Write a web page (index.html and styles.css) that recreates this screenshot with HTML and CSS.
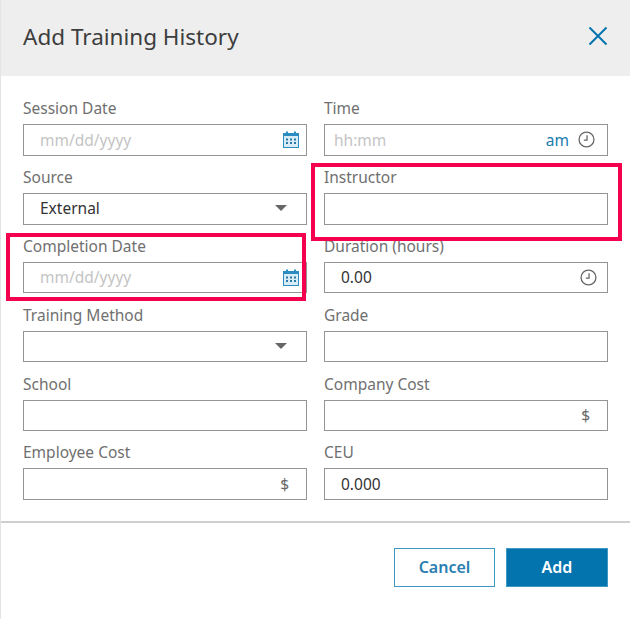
FILE: index.html
```html
<!DOCTYPE html>
<html lang="en">
<head>
<meta charset="utf-8">
<title>Add Training History</title>
<link rel="stylesheet" href="styles.css">
</head>
<body>
<div class="modal">
  <header class="head">
    <h1 class="title">Add Training History</h1>
    <svg class="close" width="20" height="20" viewBox="0 0 20 20"><path d="M1.5 1.5 18.5 18.5M18.5 1.5 1.5 18.5" fill="none" stroke="#0474af" stroke-width="2"/></svg>
  </header>
  <form class="form">
    <div class="field">
      <label class="label">Session Date</label>
      <div class="input"><span class="value ph">mm/dd/yyyy</span>
        <svg class="cal" width="16" height="17" viewBox="0 0 16 17"><rect x="0.5" y="2.5" width="15" height="14" fill="#d7ecf7" stroke="#2a8cc0"/><rect x="0" y="2" width="16" height="3" fill="#2a8cc0"/><path d="M4 0.5v3M12 0.5v3" stroke="#2a8cc0" stroke-width="2"/><path d="M3 7.500h2v2H3zM7 7.500h2v2H7zM11 7.500h2v2h-2zM3 11h2v2H3zM7 11h2v2H7zM11 11h2v2h-2z" fill="#2878a8"/></svg>
      </div>
    </div>
    <div class="field">
      <label class="label">Time</label>
      <div class="input"><span class="value ph narrow">hh:mm</span><span class="ampm">am</span>
        <svg class="clock" width="17" height="17" viewBox="0 0 16 16"><circle cx="8" cy="8" r="7" fill="none" stroke="#666" stroke-width="1.200"/><path d="M8.500 4v4.500H5.500" fill="none" stroke="#666" stroke-width="1.200"/></svg>
      </div>
    </div>
    <div class="field">
      <label class="label">Source</label>
      <div class="input"><span class="value">External</span><span class="caret"></span></div>
    </div>
    <div class="field">
      <label class="label">Instructor</label>
      <div class="input"></div>
    </div>
    <div class="field">
      <label class="label">Completion Date</label>
      <div class="input"><span class="value ph">mm/dd/yyyy</span>
        <svg class="cal" width="16" height="17" viewBox="0 0 16 17"><rect x="0.5" y="2.500" width="15" height="14" fill="#d7ecf7" stroke="#2a8cc0"/><rect x="0" y="2" width="16" height="3" fill="#2a8cc0"/><path d="M4 0.500v3M12 0.500v3" stroke="#2a8cc0" stroke-width="2"/><path d="M3 7.500h2v2H3zM7 7.500h2v2H7zM11 7.500h2v2h-2zM3 11h2v2H3zM7 11h2v2H7zM11 11h2v2h-2z" fill="#2878a8"/></svg>
      </div>
    </div>
    <div class="field">
      <label class="label">Duration (hours)</label>
      <div class="input"><span class="value">0.00</span>
        <svg class="clock end" width="17" height="17" viewBox="0 0 16 16"><circle cx="8" cy="8" r="7" fill="none" stroke="#666" stroke-width="1.200"/><path d="M8.500 4v4.500H5.500" fill="none" stroke="#666" stroke-width="1.200"/></svg>
      </div>
    </div>
    <div class="field">
      <label class="label">Training Method</label>
      <div class="input"><span class="value"></span><span class="caret"></span></div>
    </div>
    <div class="field">
      <label class="label">Grade</label>
      <div class="input"></div>
    </div>
    <div class="field">
      <label class="label">School</label>
      <div class="input"></div>
    </div>
    <div class="field">
      <label class="label">Company Cost</label>
      <div class="input"><span class="value"></span><span class="unit">$</span></div>
    </div>
    <div class="field">
      <label class="label">Employee Cost</label>
      <div class="input"><span class="value"></span><span class="unit">$</span></div>
    </div>
    <div class="field">
      <label class="label">CEU</label>
      <div class="input"><span class="value">0.000</span></div>
    </div>
  </form>
  <footer class="foot">
    <button class="btn cancel" type="button">Cancel</button>
    <button class="btn add" type="button">Add</button>
  </footer>
  <div class="mark mark-instructor"></div>
  <div class="mark mark-completion"></div>
</div>
</body>
</html>
```
FILE: styles.css
```css
* { box-sizing: border-box; }
html, body { margin: 0; height: 100%; background: #fff; }
body { font-family: "Noto Sans", "Open Sans", sans-serif; color: #333; overflow: hidden; }
.modal { position: relative; height: 619px; border-left: 1px solid #e4e4e4; }
.head { height: 76px; background: #eee; display: flex; align-items: center; justify-content: space-between; padding: 0 23px 0 22px; }
.title { margin: 0; font-size: 22.500px; font-weight: 400; color: #3d3d3d; line-height: 30px; position: relative; top: -1px; }
.close { display: block; position: relative; top: -2px; margin-right: -1px; }
.form { display: grid; grid-template-columns: 284px 284px; column-gap: 17px; grid-auto-rows: 68.800px; padding: 21.400px 0 0 22px; height: 445px; }
.field { display: flex; flex-direction: column; }
.label { font-size: 15.500px; line-height: 22px; height: 27px; color: #707070; }
.input { height: 31.500px; border: 1px solid #949494; background: #fff; display: flex; align-items: center; padding: 0 12px 1px 16px; font-size: 15.500px; }
.value { flex: 1; color: #333; line-height: 20px; }
.ph { color: #c4c4c4; }
.narrow { margin-left: -7px; }
.ampm { color: #1a7cb0; margin-right: 9px; }
.cal { margin-right: -5px; flex: none; }
.clock { flex: none; margin-right: 0; }
.clock.end { margin-right: -2px; }
.unit { color: #666; margin-right: 5px; font-size: 15.500px; line-height: 20px; }
.caret { width: 0; height: 0; border-left: 6px solid transparent; border-right: 6px solid transparent; border-top: 6px solid #666; margin-right: 7px; }
.foot { border-top: 2px solid #cfcfcf; height: 98px; padding-top: 25px; display: flex; justify-content: flex-end; gap: 11px; padding-right: 22px; }
.btn { height: 39px; font-family: inherit; font-size: 16px; font-weight: 600; padding: 0 0 1px; }
.cancel { width: 101px; background: #fff; color: #2a7fb0; border: 1px solid #3f97c4; }
.add { width: 102px; background: #0474af; color: #fff; border: 1px solid #3f97c4; }
.mark { position: absolute; border: 4px solid #f5004f; pointer-events: none; }
.mark-instructor { left: 310px; top: 163px; width: 311px; height: 78px; }
.mark-completion { left: 5px; top: 233px; width: 300px; height: 68px; }
```
